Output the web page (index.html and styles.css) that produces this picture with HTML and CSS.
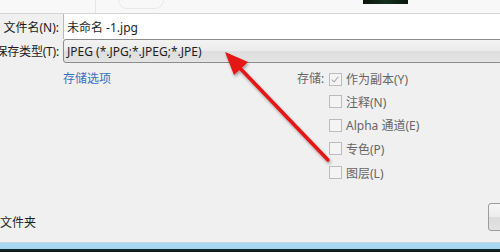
FILE: index.html
```html
<!DOCTYPE html>
<html lang="zh-CN">
<head>
    <meta charset="UTF-8">
    <title>存储为</title>
    <link rel="stylesheet" href="styles.css">
</head>
<body>

<div class="dialog">
    <!-- thumbnails strip of the file browser, mostly cut off -->
    <div class="thumbs">
        <span class="thumb thumb-a"></span>
        <span class="thumb thumb-b"></span>
        <span class="thumb thumb-dark"></span>
    </div>

    <div class="field-row name-row">
        <label class="field-label">文件名(N):</label>
        <div class="text-input">未命名 -1.jpg</div>
    </div>
    <div class="field-row type-row">
        <label class="field-label">保存类型(T):</label>
        <div class="combo">JPEG (*.JPG;*.JPEG;*.JPE)</div>
    </div>

    <div class="options">
        <a class="link" href="#">存储选项</a>
        <div class="save-group">
            <span class="group-label">存储:</span>
            <ul class="checks">
                <li><span class="box checked"></span>作为副本(Y)</li>
                <li><span class="box"></span>注释(N)</li>
                <li><span class="box"></span>Alpha 通道(E)</li>
                <li><span class="box"></span>专色(P)</li>
                <li><span class="box"></span>图层(L)</li>
            </ul>
        </div>
    </div>

    <div class="footer">
        <span class="folder">文件夹</span>
        <span class="button"></span>
    </div>

    <div class="taskbar"></div>

    <!-- red annotation arrow pointing at the type box -->
    <svg class="arrow" width="500" height="252" viewBox="0 0 500 252">
        <defs>
            <filter id="shade" x="-20%" y="-20%" width="140%" height="140%">
                <feDropShadow dx="1" dy="2" stdDeviation="1.5" flood-color="#000" flood-opacity="0.35"/>
            </filter>
        </defs>
        <g filter="url(#shade)">
            <line x1="328" y1="160" x2="236" y2="64" stroke="#e51212" stroke-width="3.5" stroke-linecap="round"/>
            <polygon points="225,52 248,62 234,75" fill="#e51212"/>
        </g>
    </svg>
</div>

</body>
</html>
```

FILE: styles.css
```css
/* Photoshop "save as" dialog, lower half */
body {
    margin: 0;
    font-family: "Noto Sans", "Noto Sans CJK SC", sans-serif;
    font-size: 12px;
    color: #1e1e1e;
}
.dialog {
    position: relative;
    width: 500px;
    height: 252px;
    overflow: hidden;
    display: flex;
    flex-direction: column;
    background-color: #f0f0f0;
}
.thumbs {
    height: 13px;
    background-color: #f8f8f8;
    border-bottom: 1px solid #d4d4d4;
    display: flex;
    align-items: flex-start;
}
.thumb {
    display: block;
}
.thumb-a {
    margin-left: 83px;
    width: 12px;
    height: 13px;
    border-right: 1px solid #e6e6e6;
}
.thumb-b {
    margin-left: 22px;
    width: 44px;
    height: 8px;
    border: 1px solid #e8e8e8;
    border-top: none;
    border-radius: 0 0 22px 22px;
}
.thumb-dark {
    margin-left: 199px;
    width: 45px;
    height: 4px;
    background: linear-gradient(90deg, #0b140c, #12301a 50%, #0b140c);
}
.field-row {
    display: flex;
    align-items: stretch;
}
.field-label {
    width: 59px;
    flex-shrink: 0;
    margin-right: 4px;
    text-align: right;
    white-space: nowrap;
    display: flex;
    align-items: center;
    justify-content: flex-end;
    color: #1a1a1a;
}
.type-row .field-label {
    letter-spacing: -0.2px;
}
.name-row {
    height: 25px;
}
.text-input {
    flex: 1;
    background-color: #fff;
    border-left: 1px solid #b9b9b9;
    padding-left: 3px;
    display: flex;
    align-items: center;
}
.type-row {
    height: 24px;
}
.combo {
    flex: 1;
    margin-right: -6px;
    border: 1px solid #8c8c8c;
    border-radius: 3px 0 0 3px;
    background: linear-gradient(#f3f3f3, #ebebeb 50%, #dedede 51%, #e4e4e4);
    padding-left: 3px;
    display: flex;
    align-items: center;
}
.options {
    display: flex;
    padding: 5px 0 0 63px;
}
.link {
    width: 234px;
    line-height: 22px;
    color: #3870c0;
    text-decoration: none;
}
.save-group {
    display: flex;
    color: #666;
}
.group-label {
    width: 32px;
    line-height: 22px;
}
.checks {
    list-style: none;
    margin: 0;
    padding: 0;
}
.checks li {
    height: 23.6px;
    display: flex;
    align-items: center;
}
.checks li:first-child {
    height: 22px;
}
.box {
    width: 11px;
    height: 11px;
    margin-right: 4px;
    border: 1px solid #bcbcbc;
    background-color: #f4f4f4;
    position: relative;
}
.box.checked::after {
    content: "";
    position: absolute;
    left: 3px;
    top: 1px;
    width: 3px;
    height: 6px;
    border: solid #a8a8a8;
    border-width: 0 1px 1px 0;
    transform: rotate(40deg);
}
.footer {
    margin-top: auto;
    height: 40px;
    display: flex;
    align-items: flex-start;
    justify-content: space-between;
}
.folder {
    margin-top: 11px;
}
.button {
    margin-top: 1px;
    width: 20px;
    height: 26px;
    margin-right: -10px;
    border: 1px solid #9c9c9c;
    border-radius: 3px;
    background: linear-gradient(#f6f6f6, #ececec 50%, #dcdcdc 51%, #e2e2e2);
}
.taskbar {
    height: 9px;
    border-top: 1px solid #c4d8e8;
    background: linear-gradient(#a9d9f2 0, #a6d6f0 6px, #12262c 6px, #0c1a1e);
}
.arrow {
    position: absolute;
    left: 0;
    top: 0;
    pointer-events: none;
}
```
